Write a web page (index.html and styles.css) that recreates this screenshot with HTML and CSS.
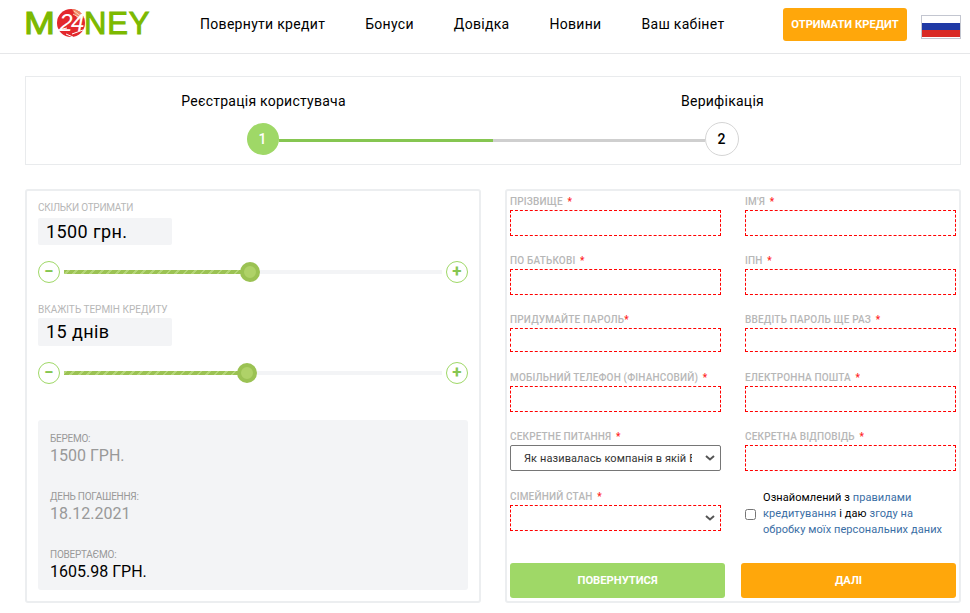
FILE: index.html
```html
<!DOCTYPE html>
<html lang="uk">
<head>
    <meta charset="UTF-8">
    <meta name="viewport" content="width=device-width, initial-scale=1.0">
    <title>M24NEY</title>
    <link rel="stylesheet" href="styles.css">
</head>
<body>
    <header class="header">
        <a class="logo" href="#">
            <span class="logo-m">M</span>
            <svg class="logo-mark" width="28" height="28" viewBox="0 0 28 28">
                <circle cx="14" cy="14" r="14" fill="#e3282d"/>
                <path d="M15 0 A14 14 0 0 1 27 9 L21 11 Z" fill="#f08a63"/>
                <path d="M17 2 L25 8 M16 5 L23 9" stroke="#fbd3bd" stroke-width="1"/>
                <path d="M1 21 L10 19 M15 25 L26 21 M9 25 L16 28" stroke="#fff" stroke-width="1"/>
                <text x="14" y="22" text-anchor="middle" class="logo-num">24</text>
            </svg>
            <span class="logo-rest">NEY</span>
        </a>
        <nav class="nav">
            <a href="#">Повернути кредит</a>
            <a href="#">Бонуси</a>
            <a href="#">Довідка</a>
            <a href="#">Новини</a>
            <a href="#">Ваш кабінет</a>
        </nav>
        <a class="btn-credit" href="#">ОТРИМАТИ КРЕДИТ</a>
        <a class="flag" href="#"><span class="flag-w"></span><span class="flag-b"></span><span class="flag-r"></span></a>
    </header>

    <main class="container">
        <div class="steps">
            <div class="step">
                <div class="step-title">Реєстрація користувача</div>
                <div class="track track-first">
                    <span class="num num-done">1</span>
                    <span class="line line-green"></span>
                </div>
            </div>
            <div class="step">
                <div class="step-title">Верифікація</div>
                <div class="track track-last">
                    <span class="line line-grey"></span>
                    <span class="num">2</span>
                </div>
            </div>
        </div>

        <div class="columns">
            <section class="card calc">
                <div class="small-label label-sum">Скільки отримати</div>
                <div class="value-box">1500 грн.</div>
                <div class="slider">
                    <button class="round" type="button">−</button>
                    <div class="bar">
                        <div class="bar-fill fill-sum"></div>
                        <span class="thumb"></span>
                    </div>
                    <button class="round" type="button">+</button>
                </div>

                <div class="small-label label-term">Вкажіть термін кредиту</div>
                <div class="value-box value-term">15 днів</div>
                <div class="slider">
                    <button class="round" type="button">−</button>
                    <div class="bar">
                        <div class="bar-fill fill-term"></div>
                        <span class="thumb"></span>
                    </div>
                    <button class="round" type="button">+</button>
                </div>

                <div class="summary">
                    <div class="sum-label">Беремо:</div>
                    <div class="sum-value">1500 ГРН.</div>
                    <div class="sum-label">День погашення:</div>
                    <div class="sum-value">18.12.2021</div>
                    <div class="sum-label">Повертаємо:</div>
                    <div class="sum-value sum-total">1605.98 ГРН.</div>
                </div>
            </section>

            <form class="card form">
                <div class="form-grid">
                    <div class="field">
                        <label>Прізвище <i>*</i></label>
                        <input type="text" class="bad">
                    </div>
                    <div class="field">
                        <label>Ім'я <i>*</i></label>
                        <input type="text" class="bad">
                    </div>
                    <div class="field">
                        <label>По батькові <i>*</i></label>
                        <input type="text" class="bad">
                    </div>
                    <div class="field">
                        <label>ІПН <i>*</i></label>
                        <input type="text" class="bad">
                    </div>
                    <div class="field">
                        <label>Придумайте пароль<i class="tight">*</i></label>
                        <input type="password" class="bad short">
                    </div>
                    <div class="field">
                        <label>Введіть пароль ще раз <i>*</i></label>
                        <input type="password" class="bad short">
                    </div>
                    <div class="field">
                        <label>Мобільний телефон (фінансовий) <i>*</i></label>
                        <input type="tel" class="bad">
                    </div>
                    <div class="field">
                        <label>Електронна пошта <i>*</i></label>
                        <input type="email" class="bad">
                    </div>
                    <div class="field">
                        <label>Секретне питання <i>*</i></label>
                        <select class="pad-bottom">
                            <option>Як називалась компанія в якій Ви вперше працювали</option>
                        </select>
                    </div>
                    <div class="field">
                        <label>Секретна відповідь <i>*</i></label>
                        <input type="text" class="bad">
                    </div>
                    <div class="field">
                        <label>Сімейний стан <i>*</i></label>
                        <select class="bad">
                            <option></option>
                        </select>
                    </div>
                    <div class="agree">
                        <input type="checkbox">
                        <p>Ознайомлений з <a href="#">правилами</a> <a href="#">кредитування</a> і даю <a href="#">згоду на</a> <a href="#">обробку моїх персональних даних</a></p>
                    </div>
                </div>
                <div class="buttons">
                    <button type="button" class="btn btn-back">ПОВЕРНУТИСЯ</button>
                    <button type="button" class="btn btn-next">ДАЛІ</button>
                </div>
            </form>
        </div>
    </main>
</body>
</html>
```

FILE: styles.css
```css
* {
    box-sizing: border-box;
}

body {
    margin: 0;
    background: #fff;
    color: #000;
    font-family: Roboto, "Liberation Sans", sans-serif;
}

a {
    text-decoration: none;
    color: inherit;
}

/* шапка */
.header {
    display: flex;
    align-items: center;
    height: 54px;
    padding: 0 9px 0 24px;
    border-bottom: 1px solid #e6e7e9;
}

.logo {
    display: flex;
    align-items: center;
    width: 176px;
    margin-top: -7px;
    color: #7cb900;
    font-family: "Liberation Sans", sans-serif;
    font-size: 31px;
    font-weight: 400;
    line-height: 1;
    -webkit-text-stroke: 1px #7cb900;
}

.logo-m {
    display: inline-block;
    width: 33px;
    transform: scaleX(1.2);
    transform-origin: left center;
}

.logo-mark {
    flex: none;
}

.logo-num {
    fill: #fff;
    font-family: "Liberation Sans", sans-serif;
    font-size: 24px;
    font-weight: 400;
    font-style: italic;
    letter-spacing: -1.5px;
    -webkit-text-stroke: 0;
}

.logo-rest {
    margin-left: -1px;
    letter-spacing: 0.8px;
}

.nav {
    display: flex;
    gap: 40px;
    margin-top: -5px;
    margin-right: auto;
    font-size: 14px;
    letter-spacing: 0.3px;
}

.btn-credit {
    width: 124px;
    height: 33px;
    line-height: 33px;
    margin-top: -5px;
    background: #ffa70b;
    border-radius: 3px;
    color: #fff;
    font-size: 11.2px;
    font-weight: 700;
    text-align: center;
}

.flag {
    display: flex;
    flex-direction: column;
    width: 40px;
    height: 24px;
    margin-left: 14px;
    border: 1px solid #c3c6d0;
}

.flag span {
    flex: 1;
}

.flag-w { background: #fff; }
.flag-b { background: #1f39a5; }
.flag-r { background: #d92a26; }

.container {
    width: 936px;
    margin: 22px 0 0 25px;
}

/* кроки */
.steps {
    display: grid;
    grid-template-columns: 1fr 1fr;
    height: 89px;
    padding: 0 8px;
    border: 1px solid #e9ebed;
}

.step-title {
    margin-top: 16px;
    font-size: 14px;
    letter-spacing: 0.25px;
    line-height: 17px;
    text-align: center;
}

.track {
    display: flex;
    align-items: center;
    height: 34px;
    margin-top: 12px;
}

.track-first {
    padding-left: calc(50% - 17px);
}

.track-last {
    padding-right: calc(50% - 16px);
}

.num {
    flex: none;
    display: flex;
    align-items: center;
    justify-content: center;
    width: 34px;
    height: 34px;
    border: 1px solid #d5d5d5;
    border-radius: 50%;
    background: #fff;
    font-size: 14px;
    font-weight: 500;
}

.num-done {
    width: 32px;
    height: 32px;
    background: #9fd867;
    border: none;
    color: #fff;
}

.line {
    flex: 1;
    height: 3px;
    margin-top: 2px;
}

.line-green { background: #86c651; }
.line-grey { background: #cfcfcf; }

/* колонки */
.columns {
    display: grid;
    grid-template-columns: 456px 456px;
    gap: 24px;
    margin-top: 24px;
}

.card {
    height: 414px;
    border: 2px solid #eceef0;
    border-radius: 3px;
}

.calc {
    padding: 11px;
}

.small-label {
    color: #b7b7b7;
    font-size: 10px;
    line-height: 12px;
    text-transform: uppercase;
}

.label-sum {
    letter-spacing: -0.25px;
}

.label-term {
    margin-top: 21px;
}

.value-box {
    width: 134px;
    height: 27px;
    margin-top: 4px;
    padding-left: 8px;
    background: #f3f4f6;
    border-radius: 2px;
    font-size: 18px;
    line-height: 27px;
    letter-spacing: 0.4px;
}

.value-term {
    height: 28px;
    line-height: 28px;
    margin-top: 2px;
}

.slider {
    display: flex;
    align-items: center;
    gap: 4px;
    height: 22px;
    margin-top: 16px;
}

.round {
    flex: none;
    display: flex;
    align-items: center;
    justify-content: center;
    width: 22px;
    height: 22px;
    padding: 0 0 1px;
    background: #fff;
    border: 1px solid #9fd867;
    border-radius: 50%;
    color: #86c651;
    font-family: Roboto, sans-serif;
    font-size: 17px;
    font-weight: 700;
    line-height: 1;
}

.bar {
    flex: 1;
    display: flex;
    align-items: center;
    height: 4px;
    background: #f3f4f6;
}

.bar-fill {
    height: 4px;
    background: repeating-linear-gradient(-45deg, #9bc253 0 4px, #b4d678 4px 6px);
}

.fill-sum { width: 186px; }
.fill-term { width: 183px; }

.thumb {
    flex: none;
    width: 20px;
    height: 20px;
    margin-left: -10px;
    border: 4px solid #9bc253;
    border-radius: 50%;
    background: #afd268;
}

.summary {
    margin-top: 36px;
    height: 170px;
    padding: 13px 12px 0;
    background: #f3f4f6;
    border-radius: 3px;
}

.sum-label {
    color: #999;
    font-size: 10px;
    line-height: 11px;
    letter-spacing: -0.25px;
    text-transform: uppercase;
}

.sum-value {
    height: 47px;
    color: #999;
    font-size: 16px;
    line-height: 23px;
}

.sum-total {
    color: #000;
}

/* форма */
.form {
    padding: 4px 3px 0;
}

.form-grid {
    display: grid;
    grid-template-columns: 211px 211px;
    column-gap: 24px;
    row-gap: 18px;
}

.field label {
    display: block;
    height: 15px;
    color: #b7b7b7;
    font-size: 10px;
    line-height: 13px;
    letter-spacing: 0.17px;
    font-weight: 500;
    text-transform: uppercase;
    white-space: nowrap;
}

.field label i {
    margin-left: 2px;
    color: #f22;
    font-style: normal;
}

.field label i.tight {
    margin-left: 0;
}

.field input,
.field select {
    display: block;
    width: 100%;
    height: 26px;
    border-radius: 0;
    background: #fff;
    font-family: Roboto, sans-serif;
}

.field input.short {
    height: 24px;
    margin-bottom: 1px;
}

.field select {
    appearance: none;
    border: 1px solid #767676;
    border-radius: 2px;
    padding: 0 28px 0 13px;
    background: #fff url("data:image/svg+xml,%3Csvg xmlns='http://www.w3.org/2000/svg' width='10' height='6'%3E%3Cpath d='M1 1l4 3.5L9 1' fill='none' stroke='%23555' stroke-width='2'/%3E%3C/svg%3E") no-repeat right 5px center;
    font-size: 11px;
    letter-spacing: 0.1px;
    color: #333;
}

.field select.pad-bottom {
    margin-bottom: 1px;
}

.field .bad {
    border: 1px dashed #f00;
    border-radius: 0;
}

.agree {
    display: flex;
    align-items: center;
    height: 48px;
    grid-column: 2;
}

.agree input {
    flex: none;
    width: 11px;
    height: 11px;
    margin: 0 7px 0 0;
}

.agree p {
    margin: 0;
    font-size: 11px;
    line-height: 16px;
    letter-spacing: 0.08px;
}

.agree a {
    color: #3a6ea5;
}

.buttons {
    display: grid;
    grid-template-columns: 1fr 1fr;
    gap: 16px;
    margin-top: 25px;
}

.btn {
    height: 35px;
    padding: 0 0 1px;
    border: none;
    border-radius: 3px;
    color: #fff;
    font-family: Roboto, sans-serif;
    font-size: 11.2px;
    font-weight: 700;
}

.btn-back { background: #9fd867; }
.btn-next { background: #ffa70b; }
```
